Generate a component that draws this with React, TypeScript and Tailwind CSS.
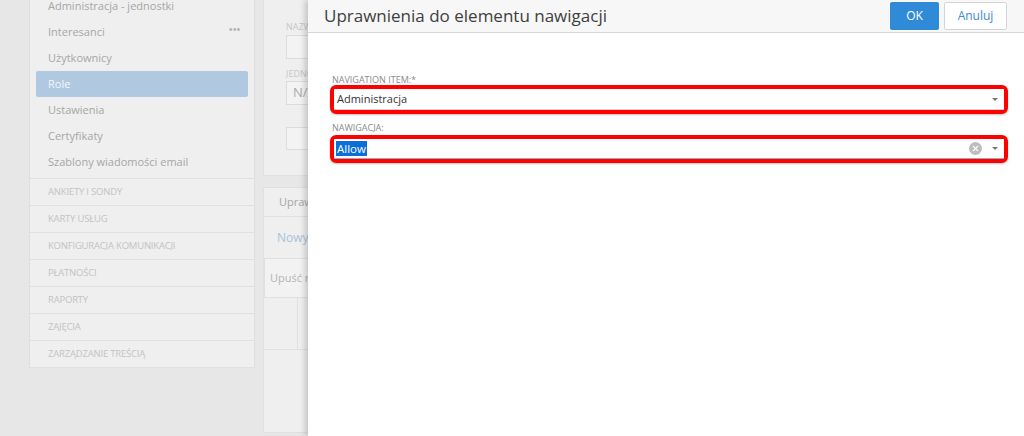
import { X } from 'lucide-react';

const menuItems = [
  'Administracja - jednostki',
  'Interesanci',
  'Użytkownicy',
  'Role',
  'Ustawienia',
  'Certyfikaty',
  'Szablony wiadomości email',
];

const sections = [
  'Ankiety i sondy',
  'Karty usług',
  'Konfiguracja komunikacji',
  'Płatności',
  'Raporty',
  'Zajęcia',
  'Zarządzanie treścią',
];

function Caret() {
  return <span className="w-0 h-0 border-l-[3px] border-r-[3px] border-t-[3px] border-l-transparent border-r-transparent border-t-[#777]" />;
}

export default function App() {
  return (
    <div className="relative w-[1024px] h-[436px] overflow-hidden bg-[#e7e7e7] font-['Open_Sans',sans-serif]">
      {/* Background page */}
      <div className="flex items-start h-full">
        {/* Sidebar */}
        <div className="ml-[29px] w-[226px] bg-[#efefef] border border-t-0 border-[#e0e0e0]">
          <div className="-mt-[7px] pb-[3px]">
            {menuItems.map((item) => (
              <div key={item} className="px-[6px]">
                <div
                  className={
                    'h-[26px] flex items-center justify-between pl-[12px] pr-[8px] text-[11px] rounded-[2px] ' +
                    (item === 'Role' ? 'bg-[#b0c9e1] text-[#f4f7fa]' : 'text-[#a6a6a6]')
                  }
                >
                  <span>{item}</span>
                  {item === 'Interesanci' && <span className="text-[#b4b4b4] text-[13px] leading-none -mt-[6px] tracking-[-1px]">•••</span>}
                </div>
              </div>
            ))}
          </div>
          {sections.map((s) => (
            <div key={s} className="h-[27px] flex items-center pl-[18px] border-t border-[#e0e0e0] text-[9.5px] uppercase text-[#c3c3c3] tracking-[-0.2px]">
              {s}
            </div>
          ))}
        </div>

        {/* Main content */}
        <div className="ml-[8px] flex-1 flex flex-col gap-[11px]">
          <div className="h-[176px] bg-[#efefef] border border-[#e0e0e0] border-t-0 pl-[22px] pt-[20px]">
            <div className="text-[9px] text-[#c6c6c6] uppercase">Nazwa</div>
            <div className="mt-[1px] h-[24px] w-[200px] border border-[#dcdcdc] bg-[#f3f3f3]" />
            <div className="mt-[8px] text-[9px] text-[#c6c6c6] uppercase">Jednostka</div>
            <div className="mt-[1px] h-[24px] w-[200px] border border-[#dcdcdc] bg-[#f3f3f3] flex items-center pl-[6px] text-[13px] text-[#aaaaaa]">N/A</div>
            <div className="mt-[22px] h-[23px] w-[200px] border border-[#dcdcdc] bg-[#f3f3f3]" />
          </div>
          <div className="h-[246px] bg-[#efefef] border border-[#e0e0e0]">
            <div className="h-[29px] border-b border-[#e0e0e0] flex items-center pl-[15px] text-[11px] text-[#a6a6a6]">Uprawnienia</div>
            <div className="h-[41px] flex items-center pl-[13px] text-[12px] text-[#a9c3dc]">Nowy</div>
            <div className="h-[40px] w-[200px] border border-[#e0e0e0] bg-[#f2f2f2] flex items-center pl-[5px] text-[11px] text-[#b4b4b4]">Upuść nagłówek kolumny</div>
            <div className="h-[52px] w-[200px] border-b border-[#e0e0e0] flex">
              <div className="w-[34px] border-r border-[#e0e0e0]" />
            </div>
          </div>
        </div>
      </div>

      {/* Dialog */}
      <div className="absolute top-0 bottom-0 right-0 left-[308px] bg-white shadow-[-3px_0_6px_rgba(0,0,0,0.18)] flex flex-col">
        <div className="h-[33px] bg-[#f7f7f7] border-b border-[#d7d7d7] flex items-center justify-between pl-[16px] pr-[17px]">
          <h1 className="text-[17px] text-[#404040] -mt-[1px]">Uprawnienia do elementu nawigacji</h1>
          <div className="flex gap-[5px] self-start mt-[2px]">
            <button className="w-[49px] h-[28px] bg-[#2f8bd7] rounded-[2px] text-white text-[12px]">OK</button>
            <button className="w-[63px] h-[28px] bg-white border border-[#d4d4d4] rounded-[2px] text-[#3b8ad2] text-[12px]">Anuluj</button>
          </div>
        </div>

        <div className="pl-[22px] pr-[16px] pt-[41px]">
          <div className="pl-[2px] text-[9px] leading-[11px] text-[#8a8a8a] uppercase">Navigation item:*</div>
          <div className="h-[29px] border-[4px] border-[#ff0000] rounded-[6px] shadow-[0_1px_2px_rgba(0,0,0,0.25)]">
            <div className="h-full bg-white border-b border-[#cfcfcf] flex items-center justify-between pl-[3px] pr-[6px]">
              <span className="text-[11px] text-[#333]">Administracja</span>
              <Caret />
            </div>
          </div>
          <div className="mt-[8px] pl-[2px] text-[9px] leading-[11px] text-[#8a8a8a] uppercase">Nawigacja:</div>
          <div className="mt-[2px] h-[28px] border-[4px] border-[#ff0000] rounded-[6px] shadow-[0_1px_2px_rgba(0,0,0,0.25)]">
            <div className="h-full bg-white border-b border-[#9fa9b6] flex items-center justify-between pl-[2px] pr-[6px]">
              <span className="text-[11.5px] text-white bg-[#0a6fd6] px-[1px] leading-[15px]">Allow</span>
              <div className="flex items-center gap-[10px]">
                <span className="w-[13px] h-[13px] rounded-full bg-[#bdbdbd] flex items-center justify-center">
                  <X size={9} strokeWidth={3} color="#ffffff" />
                </span>
                <Caret />
              </div>
            </div>
          </div>
        </div>
      </div>
    </div>
  );
}
